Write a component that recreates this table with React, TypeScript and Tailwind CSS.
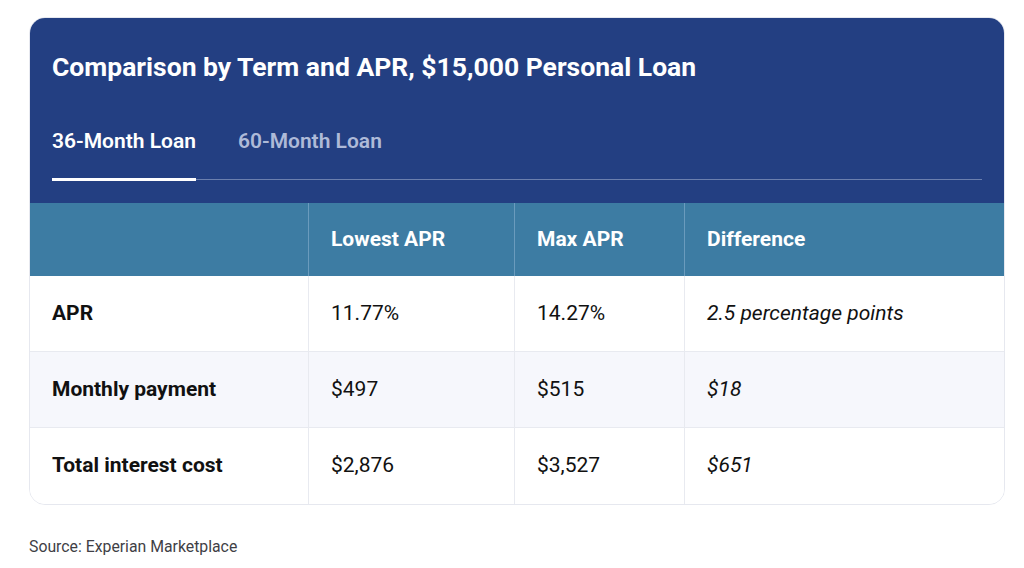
import React from "react";

const rows = [
  { label: "APR", low: "11.77%", max: "14.27%", diff: "2.5 percentage points", bg: "bg-white" },
  { label: "Monthly payment", low: "$497", max: "$515", diff: "$18", bg: "bg-[#f6f7fc]" },
  { label: "Total interest cost", low: "$2,876", max: "$3,527", diff: "$651", bg: "bg-white" },
];

export default function App() {
  return (
    <div className="w-[1024px] h-[568px] bg-white pt-[17px] pl-[29px]" style={{ fontFamily: "Roboto, 'Liberation Sans', sans-serif" }}>
      <div className="w-[976px] rounded-[16px] border border-[#e6e8ef] overflow-hidden">
        <div className="bg-[#233f82] px-[22px] pt-[33px]">
          <h1 className="text-[26.5px] leading-[32px] font-bold text-white">
            Comparison by Term and APR, $15,000 Personal Loan
          </h1>
          <div className="mt-[46px] flex gap-[42px] border-b border-[#6b7fae]">
            <div className="relative pb-[26px] text-[21px] leading-[24px] font-semibold text-white">
              36-Month Loan
              <div className="absolute left-0 right-0 bottom-[-2px] h-[3px] bg-white" />
            </div>
            <div className="pb-[26px] text-[21px] leading-[24px] font-semibold text-[#aebad8]">60-Month Loan</div>
          </div>
          <div className="h-[23px]" />
        </div>
        <div className="grid grid-cols-[279px_206px_170px_1fr]">
          <div className="h-[73px] bg-[#3d7ca3] border-r border-[#6a9bbd]" />
          <div className="h-[73px] bg-[#3d7ca3] border-r border-[#6a9bbd] flex items-center px-[22px] text-[21px] font-bold text-white">Lowest APR</div>
          <div className="h-[73px] bg-[#3d7ca3] border-r border-[#6a9bbd] flex items-center px-[22px] text-[21px] font-bold text-white">Max APR</div>
          <div className="h-[73px] bg-[#3d7ca3] flex items-center px-[22px] text-[21px] font-bold text-white">Difference</div>
          {rows.map((r, i) => (
            <React.Fragment key={r.label}>
              <div className={`h-[76px] ${r.bg} ${i < 2 ? "border-b" : ""} border-r border-[#e8eaf0] flex items-center px-[22px] text-[21px] font-bold text-[#111]`}>{r.label}</div>
              <div className={`h-[76px] ${r.bg} ${i < 2 ? "border-b" : ""} border-r border-[#e8eaf0] flex items-center px-[22px] text-[21px] text-[#111]`}>{r.low}</div>
              <div className={`h-[76px] ${r.bg} ${i < 2 ? "border-b" : ""} border-r border-[#e8eaf0] flex items-center px-[22px] text-[21px] text-[#111]`}>{r.max}</div>
              <div className={`h-[76px] ${r.bg} ${i < 2 ? "border-b" : ""} border-[#e8eaf0] flex items-center px-[22px] text-[21px] italic text-[#111]`}>{r.diff}</div>
            </React.Fragment>
          ))}
        </div>
      </div>
      <div className="mt-[32px] text-[15.8px] leading-[20px] text-[#3f3f46]">Source: Experian Marketplace</div>
    </div>
  );
}
